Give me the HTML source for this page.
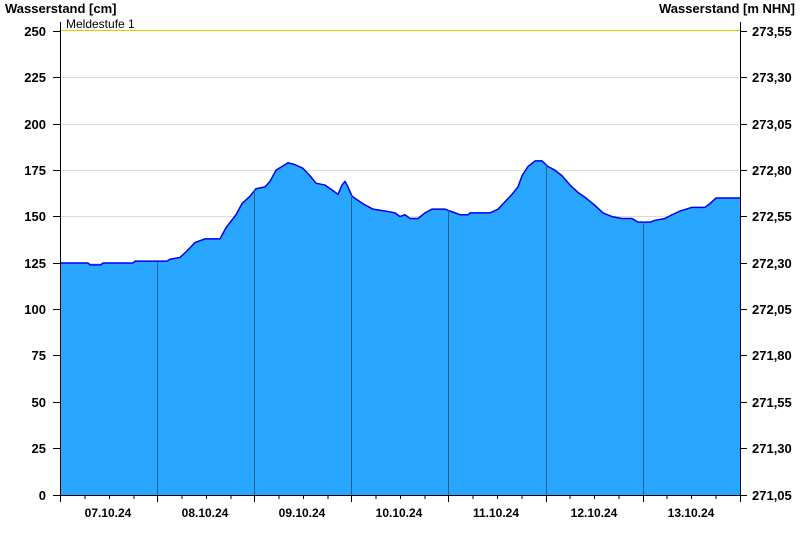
<!DOCTYPE html><html><head><style>
body{margin:0;background:#fff;width:800px;height:550px;overflow:hidden;font-family:"Liberation Sans",Arial,sans-serif}
</style></head><body>
<svg width="800" height="550" xmlns="http://www.w3.org/2000/svg" font-family="Liberation Sans, Arial, sans-serif">
<g stroke="#dcdcdc" stroke-width="1">
<line x1="61" x2="740" y1="77.5" y2="77.5"/><line x1="61" x2="740" y1="124.5" y2="124.5"/><line x1="61" x2="740" y1="170.5" y2="170.5"/><line x1="61" x2="740" y1="216.5" y2="216.5"/><line x1="61" x2="740" y1="263.5" y2="263.5"/><line x1="61" x2="740" y1="309.5" y2="309.5"/><line x1="61" x2="740" y1="355.5" y2="355.5"/><line x1="61" x2="740" y1="402.5" y2="402.5"/><line x1="61" x2="740" y1="448.5" y2="448.5"/>
</g>
<line x1="61" x2="740" y1="30.5" y2="30.5" stroke="#f5c400" stroke-width="1"/>
<g transform="translate(0,495) scale(1,-1.856)">
<polygon fill="#29a6ff" points="61,0 61,125 88,125 90,124 101,124 103,125 133,125 135,126 167,126 170,127 180,128 186,131 195,136 205,138 220,138 226,144 236,151 242,157 250,161 256,165 265,166 270,169 276,175 282,177 288,179 295,178 303,176 310,172 316,168 325,167 333,164 338,162 342,167 345,169 348,166 352,161 360,158 366,156 373,154 385,153 395,152 400,150 405,151 410,149 418,149 425,152 432,154 445,154 455,152 460,151 468,151 470,152 490,152 498,154 505,158 512,162 518,166 522,172 528,177 535,180 542,180 548,177 555,175 562,172 570,167 578,163 586,160 595,156 603,152 612,150 622,149 632,149 638,147 650,147 655,148 665,149 672,151 680,153 692,155 705,155 710,157 716,160 740,160 740,0"/>
<polyline fill="none" stroke="#0000ee" stroke-width="1.5" vector-effect="non-scaling-stroke" stroke-linejoin="round" points="61,125 88,125 90,124 101,124 103,125 133,125 135,126 167,126 170,127 180,128 186,131 195,136 205,138 220,138 226,144 236,151 242,157 250,161 256,165 265,166 270,169 276,175 282,177 288,179 295,178 303,176 310,172 316,168 325,167 333,164 338,162 342,167 345,169 348,166 352,161 360,158 366,156 373,154 385,153 395,152 400,150 405,151 410,149 418,149 425,152 432,154 445,154 455,152 460,151 468,151 470,152 490,152 498,154 505,158 512,162 518,166 522,172 528,177 535,180 542,180 548,177 555,175 562,172 570,167 578,163 586,160 595,156 603,152 612,150 622,149 632,149 638,147 650,147 655,148 665,149 672,151 680,153 692,155 705,155 710,157 716,160 740,160"/>
</g>
<g stroke="#2a5f86" stroke-width="1">
<line x1="157.5" x2="157.5" y1="262" y2="495"/><line x1="254.5" x2="254.5" y1="190" y2="495"/><line x1="351.5" x2="351.5" y1="195" y2="495"/><line x1="448.5" x2="448.5" y1="210" y2="495"/><line x1="546.5" x2="546.5" y1="165" y2="495"/><line x1="643.5" x2="643.5" y1="222" y2="495"/>
</g>
<g stroke="#000" stroke-width="1">
<line x1="60.5" x2="60.5" y1="22" y2="502"/><line x1="740.5" x2="740.5" y1="22" y2="495"/><line x1="53" x2="747" y1="495.5" y2="495.5"/>
<path d="M53 31.5h8M53 77.5h8M53 124.5h8M53 170.5h8M53 216.5h8M53 263.5h8M53 309.5h8M53 355.5h8M53 402.5h8M53 448.5h8"/>
<path d="M740 31.5h7M740 77.5h7M740 124.5h7M740 170.5h7M740 216.5h7M740 263.5h7M740 309.5h7M740 355.5h7M740 402.5h7M740 448.5h7"/>
<path d="M157.5 495v7M254.5 495v7M351.5 495v7M448.5 495v7M546.5 495v7M643.5 495v7M740.5 495v7"/>
<path d="M85 495v4M109.5 495v4M134 495v4M182 495v4M206.5 495v4M231 495v4M279 495v4M303.5 495v4M328 495v4M376 495v4M400.5 495v4M425 495v4M473 495v4M497.5 495v4M522 495v4M570 495v4M594.5 495v4M619 495v4M667 495v4M691.5 495v4M716 495v4"/>
</g>
<g font-size="13" font-weight="bold" fill="#000">
<text x="5" y="13">Wasserstand [cm]</text>
<text x="795" y="13" text-anchor="end">Wasserstand [m NHN]</text>
<g text-anchor="end">
<text x="46" y="36">250</text><text x="46" y="82">225</text><text x="46" y="129">200</text><text x="46" y="175">175</text><text x="46" y="221">150</text><text x="46" y="268">125</text><text x="46" y="314">100</text><text x="46" y="360">75</text><text x="46" y="407">50</text><text x="46" y="453">25</text><text x="46" y="500">0</text>
</g>
<g>
<text x="752" y="36">273,55</text><text x="752" y="82">273,30</text><text x="752" y="129">273,05</text><text x="752" y="175">272,80</text><text x="752" y="221">272,55</text><text x="752" y="268">272,30</text><text x="752" y="314">272,05</text><text x="752" y="360">271,80</text><text x="752" y="407">271,55</text><text x="752" y="453">271,30</text><text x="752" y="500">271,05</text>
</g>
<g text-anchor="middle" font-size="12">
<text x="108" y="517">07.10.24</text><text x="205" y="517">08.10.24</text><text x="302" y="517">09.10.24</text><text x="399" y="517">10.10.24</text><text x="496" y="517">11.10.24</text><text x="594" y="517">12.10.24</text><text x="691" y="517">13.10.24</text>
</g>
</g>
<text x="66" y="28" font-size="12" fill="#000">Meldestufe 1</text>
</svg>
</body></html>
